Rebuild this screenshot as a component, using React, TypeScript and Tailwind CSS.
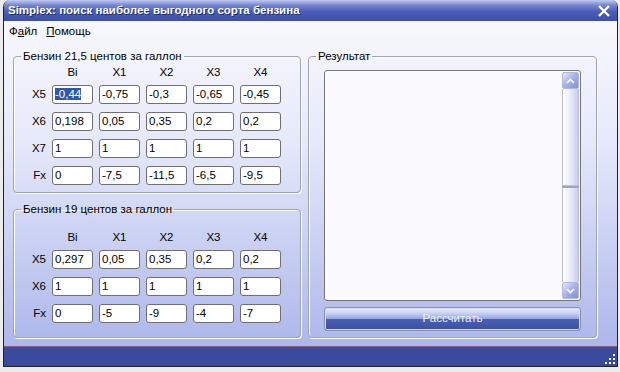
import type { ReactNode } from 'react';

// ── Data ──────────────────────────────────────────────────────────────────────

const HEAD = ['Bi', 'X1', 'X2', 'X3', 'X4'];

const TABLE_A: [string, string[]][] = [
  ['X5', ['-0,44', '-0,75', '-0,3', '-0,65', '-0,45']],
  ['X6', ['0,198', '0,05', '0,35', '0,2', '0,2']],
  ['X7', ['1', '1', '1', '1', '1']],
  ['Fx', ['0', '-7,5', '-11,5', '-6,5', '-9,5']],
];

const TABLE_B: [string, string[]][] = [
  ['X5', ['0,297', '0,05', '0,35', '0,2', '0,2']],
  ['X6', ['1', '1', '1', '1', '1']],
  ['Fx', ['0', '-5', '-9', '-4', '-7']],
];

const FONT = "font-['Liberation_Sans',Arial,sans-serif]";

// ── Pieces ────────────────────────────────────────────────────────────────────

function Group({ title, className = '', children }: { title: string; className?: string; children: ReactNode }) {
  return (
    <fieldset
      className={`rounded-[4px] border border-[#9da2bc] shadow-[inset_1px_1px_0_#ffffff,1px_1px_0_#ffffff] ${className}`}
    >
      <legend className="ml-[7px] px-[2px] text-[11.5px] leading-[14px] text-black">{title}</legend>
      {children}
    </fieldset>
  );
}

function Cell({ value, selected = false }: { value: string; selected?: boolean }) {
  return (
    <div className="h-[19px] rounded-[3px] border border-[#6f6f6f] bg-white pl-[2px] text-[11.5px] leading-[17px] text-black">
      {selected ? <span className="bg-[#2f58a6] text-white">{value}</span> : value}
    </div>
  );
}

function Table({ rows, headGap, selectFirst = false }: { rows: [string, string[]][]; headGap: string; selectFirst?: boolean }) {
  return (
    <div className={headGap}>
      <div className="grid grid-cols-[32px_41px_41px_41px_41px_41px] gap-x-[6px]">
        <div />
        {HEAD.map((h) => (
          <div key={h} className="h-[16px] text-center text-[11.5px] leading-[16px] text-black">
            {h}
          </div>
        ))}
      </div>
      <div className="mt-[5px] grid grid-cols-[32px_41px_41px_41px_41px_41px] gap-x-[6px] gap-y-[8px]">
        {rows.map(([label, vals], r) => (
          <div key={label} className="contents">
            <div className="h-[19px] text-right text-[11.5px] leading-[19px] text-black">{label}</div>
            {vals.map((v, i) => (
              <Cell key={i} value={v} selected={selectFirst && r === 0 && i === 0} />
            ))}
          </div>
        ))}
      </div>
    </div>
  );
}

function Chevron({ up }: { up: boolean }) {
  return (
    <svg width="9" height="6" viewBox="0 0 9 6">
      <path
        d={up ? 'M1 5 L4.5 1.5 L8 5' : 'M1 1 L4.5 4.5 L8 1'}
        fill="none"
        stroke="#ffffff"
        strokeWidth="1.6"
      />
    </svg>
  );
}

function ScrollButton({ up }: { up: boolean }) {
  return (
    <div className="flex h-[17px] w-[17px] items-center justify-center rounded-[2px] border border-[#b4b8d8] bg-[linear-gradient(135deg,#e6e9fc_0%,#a9b4ea_45%,#8190d8_100%)]">
      <Chevron up={up} />
    </div>
  );
}

// ── App ───────────────────────────────────────────────────────────────────────

export default function App() {
  return (
    <div className={`h-[372px] w-[620px] overflow-hidden bg-[#ececec] pb-[5px] pl-[3px] pr-[2px] ${FONT}`}>
      <div className="flex h-full flex-col overflow-hidden rounded-t-[7px] border-x border-b border-[#222]">
        {/* title bar */}
        <div className="flex h-[21px] shrink-0 items-center justify-between bg-[linear-gradient(to_bottom,#c3cbf1_0%,#7486d2_25%,#4b5eb6_55%,#3c50a8_100%)] pl-[4px] pr-[6px]">
          <span className="text-[11.5px] font-bold leading-[21px] text-white [text-shadow:1px_1px_0_#1f2d70]">
            Simplex: поиск наиболее выгодного сорта бензина
          </span>
          <svg width="14" height="14" viewBox="0 0 14 14">
            <path d="M2 2 L12 12 M12 2 L2 12" stroke="#ffffff" strokeWidth="2.4" />
          </svg>
        </div>

        {/* body */}
        <div className="flex flex-1 flex-col bg-[linear-gradient(to_bottom,#f8f8fd_0%,#e6e9fa_35%,#a7b2e9_100%)]">
          {/* menu */}
          <div className="flex h-[20px] shrink-0 items-center gap-[9px] pl-[5px] pt-[1px] text-[11.5px] text-black">
            <span>
              Ф<span className="underline">а</span>йл
            </span>
            <span>
              <span className="underline">П</span>омощь
            </span>
          </div>

          {/* content */}
          <div className="flex flex-1 gap-[7px] pl-[9px] pr-[20px] pt-[8px]">
            <div className="flex w-[288px] flex-col gap-[9px]">
              <Group title="Бензин 21,5 центов за галлон" className="h-[144px]">
                <Table rows={TABLE_A} headGap="mt-[1px]" selectFirst />
              </Group>
              <Group title="Бензин 19 центов за галлон" className="h-[136px]">
                <Table rows={TABLE_B} headGap="mt-[13px]" />
              </Group>
            </div>

            <Group title="Результат" className="h-[289px] flex-1">
              <div className="px-[15px]">
                <div className="mt-[7px] flex h-[231px] justify-end rounded-[3px] border border-[#767676] bg-[#fbfbff] p-[1px]">
                  <div className="flex w-[17px] flex-col">
                    <ScrollButton up />
                    <div className="h-[97px] border-x border-b border-[#b9bdd9] bg-[linear-gradient(to_right,#ffffff,#f0f0fb_40%,#c9cdf0)]" />
                    <div className="h-[2px] bg-[#a4a2bf]" />
                    <div className="flex-1 border-x border-[#b9bdd9] bg-[linear-gradient(to_right,#ffffff,#f0f0fb_40%,#c9cdf0)]" />
                    <ScrollButton up={false} />
                  </div>
                </div>
                <div className="mt-[6px] flex h-[24px] items-center justify-center rounded-[3px] border border-[#8a8fae] bg-[linear-gradient(to_bottom,#eef0fd_0%,#c6cef4_25%,#97a7e4_48%,#4a5eb2_52%,#3b4fa4_100%)] text-[11.5px] text-[#eef1ff] shadow-[inset_0_0_0_1px_#d8dcf2]">
                  Рассчитать
                </div>
              </div>
            </Group>
          </div>

          {/* status bar */}
          <div className="flex h-[20px] shrink-0 items-end justify-end border-t border-[#8c5f86] bg-[#3a4a9c] pb-[1px] pr-[1px]">
            <svg width="11" height="11" viewBox="0 0 11 11">
              {[
                [8, 0],
                [8, 4],
                [4, 4],
                [8, 8],
                [4, 8],
                [0, 8],
              ].map(([x, y], i) => (
                <rect key={i} x={x} y={y} width="2" height="2" fill="#ffffff" />
              ))}
            </svg>
          </div>
        </div>
      </div>
    </div>
  );
}
